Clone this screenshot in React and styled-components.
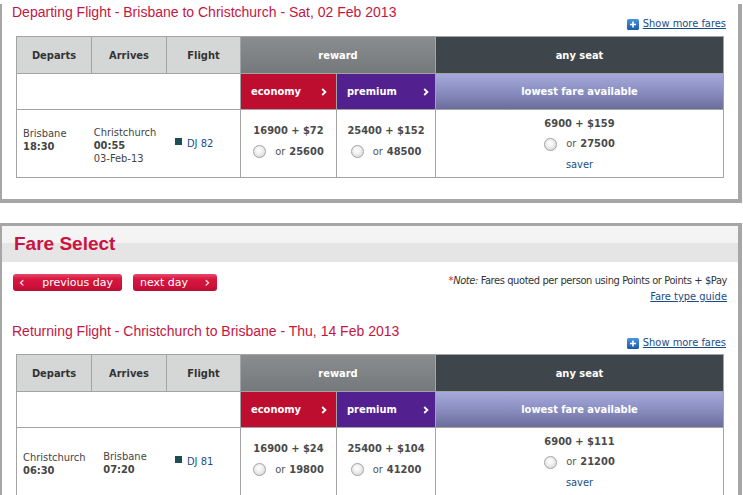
import React from "react";
import styled, { createGlobalStyle } from "styled-components";

// fonts: Tahoma-ish for the tables, Arial for the headings
const TAHOMA = `"DejaVu Sans Condensed", "DejaVu Sans", sans-serif`;
const VERDANA = `"DejaVu Sans", sans-serif`;
const ARIAL = `"Liberation Sans", Arial, sans-serif`;

const GlobalStyle = createGlobalStyle`
  body {
    margin: 0;
    background: #fff;
    font-family: ${TAHOMA};
    font-size: 11px;
    color: #444;
  }
`;

const Page = styled.div`
  width: 743px;
  height: 495px;
  overflow: hidden;
`;

const Panel = styled.section`
  width: 742px;
  box-sizing: border-box;
  border: solid #a6a6a6;
  border-width: ${(p) => (p.$first ? "0 4px 4px 2px" : "3px 4px 0 2px")};
  padding-bottom: ${(p) => (p.$first ? "21px" : "0")};
  margin-bottom: ${(p) => (p.$first ? "20px" : "0")};
`;

const HeaderBand = styled.div`
  height: 36px;
  padding-left: 12px;
  background: linear-gradient(#f4f4f4 0, #f4f4f4 47%, #e5e5e5 47%, #e5e5e5 100%);
  font: bold 19px/36px ${ARIAL};
  color: #cc1240;
`;

const Toolbar = styled.div`
  display: flex;
  justify-content: space-between;
  align-items: flex-start;
  padding: 11px 11px 0 11px;
`;

const DayNav = styled.div`
  display: flex;
  gap: 11px;
  margin-top: 1px;
`;

const DayButton = styled.button`
  width: ${(p) => p.$w}px;
  height: 17px;
  box-sizing: border-box;
  border: 0;
  border-radius: 3px;
  padding: ${(p) => p.$pad};
  display: flex;
  align-items: center;
  justify-content: space-between;
  background: linear-gradient(#e8486b 0, #d6173f 30%, #cf123b 70%, #b80d32 100%);
  color: #fff;
  font: 11px/17px ${VERDANA};
  cursor: pointer;
`;

const Chevron = styled.span`
  font-size: 14px;
  line-height: 15px;
`;

const NoteBlock = styled.div`
  text-align: right;
  line-height: 16px;
  color: #333;
`;

const NoteLine = styled.div`
  letter-spacing: -0.4px;
`;

const Star = styled.span`
  color: #d0103a;
`;

const Italic = styled.em`
  font-style: italic;
`;

const GuideLink = styled.a`
  color: #1b4c8a;
  text-decoration: underline;
`;

const Title = styled.h2`
  margin: ${(p) => (p.$first ? "4px" : "18px")} 0 0 10px;
  font: 14px/16px ${ARIAL};
  color: #c5163f;
`;

const ShowMoreRow = styled.div`
  display: flex;
  justify-content: flex-end;
  padding-right: 12px;
  margin-top: -3px;
  line-height: 14px;
`;

const ShowMore = styled.a`
  display: flex;
  align-items: center;
  gap: 4px;
  color: #1b4c8a;
  text-decoration: underline;
`;

const Grid = styled.div`
  display: grid;
  grid-template-columns: 74px 74px 73px 95px 98px 287px;
  grid-template-rows: 36px 35px 67px;
  gap: 1px;
  padding: 1px;
  width: max-content;
  margin: ${(p) => (p.$first ? "5px" : "4px")} 0 0 14px;
  background: #a3a3a3;
`;

const ColHead = styled.div`
  display: flex;
  align-items: center;
  justify-content: center;
  background: #d5d7d7;
  color: #333;
  font-weight: bold;
`;

const GroupHead = styled.div`
  grid-column: ${(p) => p.$span};
  display: flex;
  align-items: center;
  justify-content: center;
  color: #fff;
  font-weight: bold;
  background: ${(p) =>
    p.$dark ? "#3f464b" : "linear-gradient(#898d90, #75797c)"};
`;

const Blank = styled.div`
  grid-column: span 3;
  background: #fff;
`;

const CabinHead = styled.div`
  display: flex;
  align-items: center;
  justify-content: space-between;
  padding: 0 ${(p) => (p.$tone === "economy" ? "9px" : "6px")} 0 10px;
  background: ${(p) => (p.$tone === "economy" ? "#bd0e30" : "#53208f")};
  color: #fff;
  font-weight: bold;
`;

const LowestHead = styled.div`
  display: flex;
  align-items: center;
  justify-content: center;
  background: linear-gradient(#a6aadb, #8a8dc0 50%, #6b6e9b);
  color: #fff;
  font-weight: bold;
`;

const Route = styled.div`
  grid-column: span 3;
  display: grid;
  grid-template-columns: 150px 73px;
  align-items: center;
  background: #fff;
`;

const Pair = styled.div`
  display: grid;
  grid-template-columns: 75px 75px;
  align-items: start;
  padding-top: 3px;
  line-height: 13px;
`;

const Departs = styled.div`
  padding: 1px 0 0 6px;
`;

const Arrives = styled.div`
  text-align: center;
  padding-right: 9px;
`;

const Stack = styled.div`
  display: inline-block;
  text-align: left;
`;

const Time = styled.div`
  font-weight: bold;
`;

const Flight = styled.div`
  display: flex;
  align-items: flex-start;
  padding-left: 8px;
  line-height: 13px;
  color: #1b4c8a;
`;

const Marker = styled.span`
  width: 7px;
  height: 7px;
  margin: 1px 5px 0 0;
  background: #1d4e56;
`;

const FareCell = styled.div`
  display: flex;
  flex-direction: column;
  align-items: center;
  justify-content: center;
  background: #fff;
  line-height: ${(p) => (p.$any ? "20.5px" : "21px")};
  padding: ${(p) => (p.$any ? "2px 0 0" : "0 0 5px")};
  color: #4a4a4a;
`;

const Points = styled.div`
  font-weight: bold;
`;

const Option = styled.label`
  display: flex;
  align-items: center;
`;

const Radio = styled.span`
  width: 11px;
  height: 11px;
  margin-right: 9px;
  border-radius: 50%;
  border: 1px solid #a5a5a5;
  background: radial-gradient(circle at 45% 40%, #ffffff 0, #f2f2f2 35%, #cfcfcf 100%);
  box-shadow: 0 0 1px #ddd;
`;

const Or = styled.span`
  color: #555;
  margin-right: 4px;
`;

const Saver = styled.a`
  color: #1b4c8a;
`;

const PlusIcon = () => (
  <svg width="12" height="11" viewBox="0 0 12 11">
    <defs>
      <linearGradient id="plusGrad" x1="0" y1="0" x2="0" y2="1">
        <stop offset="0" stopColor="#4b95df" />
        <stop offset="1" stopColor="#1c5aa8" />
      </linearGradient>
    </defs>
    <rect x="0" y="0" width="12" height="11" rx="1.5" fill="url(#plusGrad)" />
    <path d="M6 2.5v6M3 5.5h6" stroke="#fff" strokeWidth="1.6" />
  </svg>
);

const ArrowRight = () => (
  <svg width="6" height="8" viewBox="0 0 6 8">
    <path d="M1.2 1l3.2 3-3.2 3" fill="none" stroke="#fff" strokeWidth="1.8" />
  </svg>
);

const flights = [
  {
    title: "Departing Flight - Brisbane to Christchurch - Sat, 02 Feb 2013",
    from: "Brisbane",
    dep: "18:30",
    to: "Christchurch",
    arr: "00:55",
    arrDate: "03-Feb-13",
    code: "DJ 82",
    economy: ["16900 + $72", "25600"],
    premium: ["25400 + $152", "48500"],
    any: ["6900 + $159", "27500"],
  },
  {
    title: "Returning Flight - Christchurch to Brisbane - Thu, 14 Feb 2013",
    from: "Christchurch",
    dep: "06:30",
    to: "Brisbane",
    arr: "07:20",
    code: "DJ 81",
    economy: ["16900 + $24", "19800"],
    premium: ["25400 + $104", "41200"],
    any: ["6900 + $111", "21200"],
  },
];

function FareOption({ value }) {
  return (
    <Option>
      <Radio />
      <Or>or</Or>
      <Points>{value}</Points>
    </Option>
  );
}

function FlightTable({ f, first }) {
  return (
    <>
      <Title $first={first}>{f.title}</Title>
      <ShowMoreRow>
        <ShowMore>
          <PlusIcon />
          Show more fares
        </ShowMore>
      </ShowMoreRow>
      <Grid $first={first}>
        <ColHead>Departs</ColHead>
        <ColHead>Arrives</ColHead>
        <ColHead>Flight</ColHead>
        <GroupHead $span="span 2">reward</GroupHead>
        <GroupHead $dark>any seat</GroupHead>

        <Blank />
        <CabinHead $tone="economy">
          economy <ArrowRight />
        </CabinHead>
        <CabinHead $tone="premium">
          premium <ArrowRight />
        </CabinHead>
        <LowestHead>lowest fare available</LowestHead>

        <Route>
          <Pair>
            <Departs>
              <div>{f.from}</div>
              <Time>{f.dep}</Time>
            </Departs>
            <Arrives>
              <Stack>
                <div>{f.to}</div>
                <Time>{f.arr}</Time>
                {f.arrDate && <div>{f.arrDate}</div>}
              </Stack>
            </Arrives>
          </Pair>
          <Flight>
            <Marker />
            {f.code}
          </Flight>
        </Route>
        <FareCell>
          <Points>{f.economy[0]}</Points>
          <FareOption value={f.economy[1]} />
        </FareCell>
        <FareCell>
          <Points>{f.premium[0]}</Points>
          <FareOption value={f.premium[1]} />
        </FareCell>
        <FareCell $any>
          <Points>{f.any[0]}</Points>
          <FareOption value={f.any[1]} />
          <Saver>saver</Saver>
        </FareCell>
      </Grid>
    </>
  );
}

export default function App() {
  return (
    <Page>
      <GlobalStyle />
      <Panel $first>
        <FlightTable f={flights[0]} first />
      </Panel>
      <Panel>
        <HeaderBand>Fare Select</HeaderBand>
        <Toolbar>
          <DayNav>
            <DayButton $w={109} $pad="0 9px 0 6px">
              <Chevron>‹</Chevron>
              previous day
            </DayButton>
            <DayButton $w={84} $pad="0 7px 0 7px">
              next day
              <Chevron>›</Chevron>
            </DayButton>
          </DayNav>
          <NoteBlock>
            <NoteLine>
              <Star>*</Star>
              <Italic>Note:</Italic> Fares quoted per person using Points or
              Points + $Pay
            </NoteLine>
            <GuideLink>Fare type guide</GuideLink>
          </NoteBlock>
        </Toolbar>
        <FlightTable f={flights[1]} />
      </Panel>
    </Page>
  );
}
